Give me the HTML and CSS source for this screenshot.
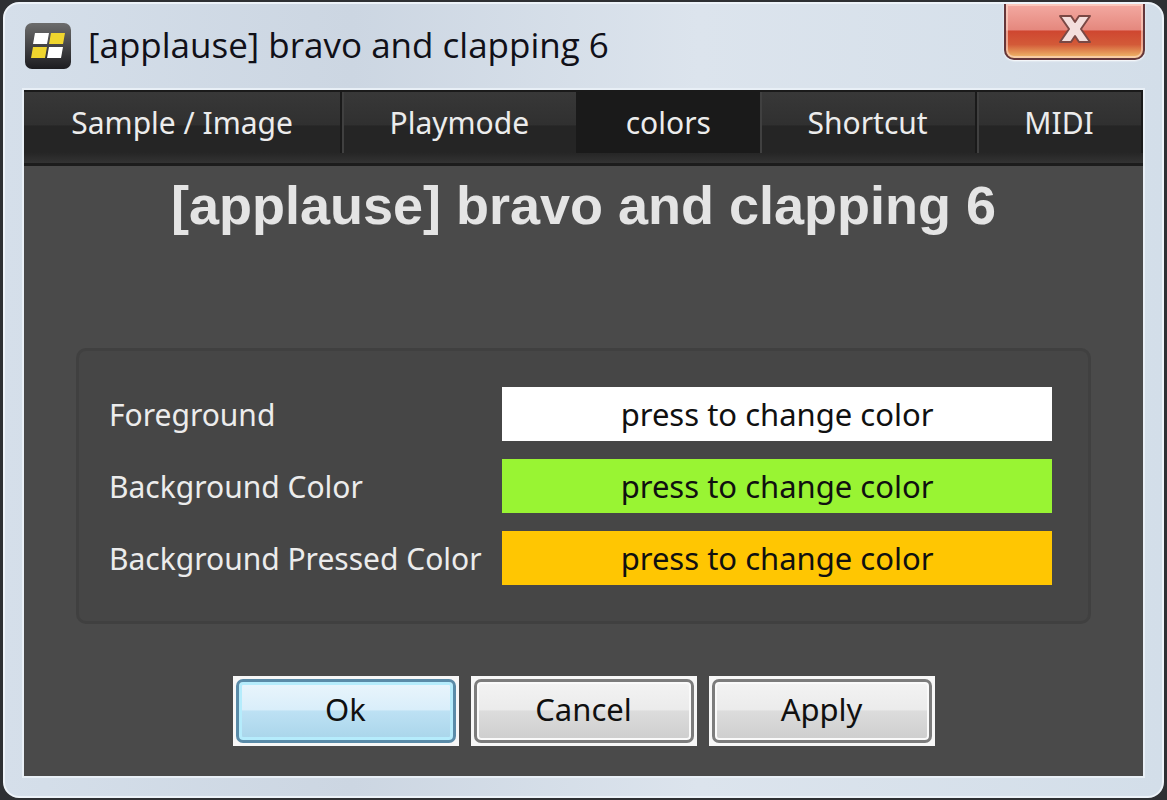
FILE: index.html
```html
<!DOCTYPE html>
<html lang="en">
<head>
    <meta charset="UTF-8">
    <meta name="viewport" content="width=device-width, initial-scale=1.0">
    <title>[applause] bravo and clapping 6</title>
    <link rel="stylesheet" href="styles.css">
</head>
<body>
    <div class="window">
        <header class="titlebar">
            <svg class="app-icon" viewBox="0 0 48 48" aria-hidden="true">
                <defs>
                    <linearGradient id="iconBg" x1="0" y1="0" x2="0" y2="1">
                        <stop offset="0" stop-color="#6c6c6c"/>
                        <stop offset="0.5" stop-color="#444446"/>
                        <stop offset="1" stop-color="#1c1c20"/>
                    </linearGradient>
                </defs>
                <rect x="1" y="1" width="46" height="46" rx="7" fill="url(#iconBg)"/>
                <path d="M11 11h14l-2 11H9z" fill="#fff"/>
                <path d="M27 11h14l-2 11H25z" fill="#efd52e"/>
                <path d="M9 25h14l-2 11H7z" fill="#efd52e"/>
                <path d="M25 25h14l-2 11H23z" fill="#fff"/>
            </svg>
            <span class="window-title">[applause] bravo and clapping 6</span>
            <button class="close-button" aria-label="Close">
                <svg class="close-icon" viewBox="0 0 34 30" aria-hidden="true">
                    <path d="M2 2h11l4 6 4-6h11l-9 13 9 13H21l-4-6-4 6H2l9-13z" fill="#f3dedc" stroke="#7a4844" stroke-width="2" stroke-linejoin="round"/>
                </svg>
            </button>
        </header>
        <main class="client">
            <nav class="tabs">
                <button class="tab">Sample / Image</button>
                <button class="tab">Playmode</button>
                <button class="tab active">colors</button>
                <button class="tab">Shortcut</button>
                <button class="tab">MIDI</button>
            </nav>
            <h1>[applause] bravo and clapping 6</h1>
            <div class="color-group">
                <label for="foreground">Foreground</label>
                <button id="foreground" class="color-button white">press to change color</button>
                <label for="background">Background Color</label>
                <button id="background" class="color-button green">press to change color</button>
                <label for="pressed">Background Pressed Color</label>
                <button id="pressed" class="color-button orange">press to change color</button>
            </div>
            <div class="dialog-buttons">
                <button class="dialog-button default">Ok</button>
                <button class="dialog-button">Cancel</button>
                <button class="dialog-button">Apply</button>
            </div>
        </main>
    </div>
</body>
</html>
```
FILE: styles.css
```css
* {
    box-sizing: border-box;
}
body {
    margin: 0;
    padding: 2px 3px;
    min-height: 100vh;
    display: flex;
    background-color: #2e3033;
    font-family: "Noto Sans", sans-serif;
    font-size: 30px;
}
button {
    font-family: inherit;
    font-size: inherit;
    border: none;
    margin: 0;
    padding: 0;
    cursor: pointer;
}
.window {
    flex: 1;
    display: flex;
    flex-direction: column;
    padding: 0 17px 18px;
    border: 2px solid #edf3f9;
    border-radius: 16px;
    background: linear-gradient(90deg, #d5dfea, #ccd6e2 30%, #dce4ed 60%, #d3dee9);
}
.titlebar {
    display: flex;
    align-items: center;
    height: 84px;
}
.app-icon {
    width: 48px;
    height: 48px;
    margin-left: 2px;
}
.window-title {
    flex: 1;
    margin-left: 16px;
    padding-bottom: 2px;
    font-family: "Open Sans", sans-serif;
    font-size: 35px;
    line-height: 48px;
    color: #101018;
}
.close-button {
    align-self: flex-start;
    display: flex;
    align-items: center;
    justify-content: center;
    width: 141px;
    height: 56px;
    padding-bottom: 4px;
    border: 2px solid #64363a;
    border-top: none;
    border-radius: 0 0 10px 10px;
    background: linear-gradient(#f3aaa2, #e5887e 48%, #cf4630 50%, #d35a38 75%, #f0bd6c);
    box-shadow: inset 0 0 0 2px rgba(255, 220, 205, 0.6), 0 1px 2px #ffffff;
}
.close-icon {
    width: 34px;
    height: 30px;
}
.client {
    flex: 1;
    display: flex;
    flex-direction: column;
    border: 2px solid #e8eff6;
    background-color: #4a4a4a;
}
.tabs {
    display: flex;
    height: 76px;
    padding-bottom: 10px;
    border-top: 2px solid #1a1a1a;
    border-bottom: 3px solid #1c1c1c;
    background: linear-gradient(#383838, #303030 46%, #252525 48%, #252525 85%, #333333);
}
.tab {
    flex: 1 1 auto;
    padding: 0 46px;
    border-left: 2px solid #1a1a1a;
    box-shadow: inset 2px 0 0 #404040;
    background: none;
    color: #ececec;
    white-space: nowrap;
}
.tab:first-child {
    border-left: none;
    box-shadow: none;
}
.tab:last-child {
    border-right: 2px solid #1a1a1a;
}
.tab.active {
    background-color: #1a1a1a;
    box-shadow: none;
}
h1 {
    margin: 4px 0 0;
    font-family: "Liberation Sans", Arial, sans-serif;
    font-size: 54px;
    line-height: 70px;
    text-align: center;
    color: #e4e4e4;
}
.color-group {
    display: grid;
    grid-template-columns: 40% 1fr;
    align-items: center;
    gap: 18px 16px;
    margin: 108px 52px 0;
    padding: 36px 36px 36px 30px;
    border: 3px solid #404040;
    border-radius: 10px;
    background-color: #464646;
    color: #ececec;
}
.color-group label {
    white-space: nowrap;
}
.color-button {
    height: 54px;
    font-size: 31px;
    color: #101010;
}
.white {
    background-color: #ffffff;
}
.green {
    background-color: #99f433;
}
.orange {
    background-color: #ffc602;
}
.dialog-buttons {
    display: flex;
    justify-content: center;
    gap: 12px;
    margin: 52px 0 30px;
}
.dialog-button {
    width: 226px;
    height: 70px;
    padding-bottom: 4px;
    border: 3px solid #f7f7f7;
    background-color: #f7f7f7;
    font-size: 31px;
    color: #101010;
    position: relative;
    z-index: 0;
}
/* rounded face inside the square white edge */
.dialog-button::before {
    content: "";
    position: absolute;
    inset: 0;
    z-index: -1;
    border: 3px solid #7c7c7c;
    border-radius: 7px;
    background: linear-gradient(#f3f3f3, #ebebeb 48%, #dcdcdc 50%, #cecece);
    box-shadow: inset 0 0 0 2px #fafafa;
}
.dialog-button.default::before {
    border-color: #5a8ba8;
    background: linear-gradient(#eaf5fc, #d9eefa 48%, #bde1f4 50%, #a9d5ea);
    box-shadow: inset 0 0 0 3px #b5ecfc;
}
```
